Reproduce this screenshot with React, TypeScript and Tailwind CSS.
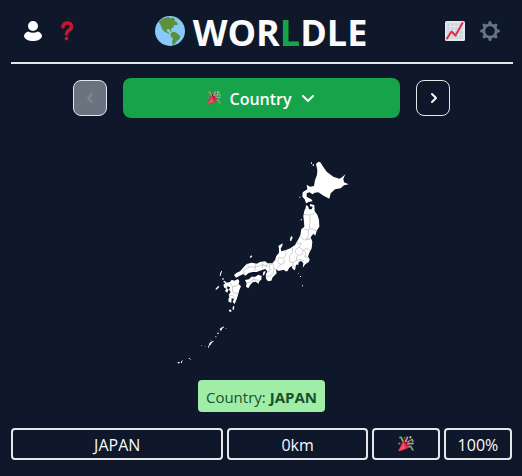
import React from "react";

function Globe() {
  return (
    <svg viewBox="0 0 90 90" className="size-[30px]" aria-hidden="true">
      <circle cx="45" cy="45" r="45" fill="#88c9f9" />
      <path
        fill="#5c913b"
        d="M11 18 L23 8 L40 3 L47 7 L55 5 L61 10 L58 15 L66 18 L69 26 L62 28 L58 26 L55 34 L49 38 L47 44 L42 39 L36 40 L35 45 L41 49 L43 54 L36 50 L28 47 L21 38 L17 27Z M49 50 L57 47 L64 50 L70 55 L76 60 L73 70 L65 76 L60 84 L53 88 L51 75 L54 68 L48 62 L46 55Z M44 43 l5 0 l1 4 l-5 -1Z"
      />
    </svg>
  );
}

function Party({ className }: { className: string }) {
  return (
    <svg viewBox="0 0 36 36" className={className} aria-hidden="true">
      <path fill="#dd2e44" d="M12 8 C10 13 1 33 1 34 C3 36 23 28 28 25 C26 18 20 10 12 8Z" />
      <path fill="#ea596e" d="M13 12 C12 20 5 29 1 34 L18 27 C14 24 12 19 13 12Z" />
      <path fill="#a0041e" d="M12 8 C18 8 28 18 28 24 C23 25 12 16 12 8Z" />
      <path d="M18 14 C15 8 23 9 21 1" fill="none" stroke="#aa8dd8" strokeWidth="4" />
      <path d="M21 19 C25 14 29 19 35 16" fill="none" stroke="#aa8dd8" strokeWidth="4" />
      <path d="M3 4 C11 0 6 9 12 12" fill="none" stroke="#77b255" strokeWidth="4" />
      <path d="M24 24 C32 20 29 31 35 32" fill="none" stroke="#77b255" strokeWidth="4" />
      <path d="M22 14 C24 9 29 10 33 7" fill="none" stroke="#ffcc4d" strokeWidth="3" strokeDasharray="3 2" />
      <circle cx="28" cy="3" r="2.500" fill="#ffcc4d" />
      <circle cx="3" cy="17" r="2.500" fill="#9266cc" />
      <circle cx="33" cy="11" r="2.500" fill="#77b255" />
      <circle cx="15" cy="4" r="2" fill="#5c913b" />
    </svg>
  );
}

function Person() {
  return (
    <svg viewBox="0 0 20 20" className="size-5" fill="#fff" aria-hidden="true">
      <circle cx="10" cy="5" r="5" />
      <path d="M5 10.500 Q10 13 15 10.500 C17 11 19 13 19 15.200 C18 18.500 14 20 10 20 S2 18.500 1 15.200 C1 13 3 11 5 10.500Z" />
    </svg>
  );
}

function Question() {
  return (
    <svg viewBox="0 0 20 20" className="size-5" aria-hidden="true">
      <path d="M6 6 C6 3 8 2 10.500 2 C13.500 2 14.500 4 14.500 6 C14.500 9.500 9.500 9 9.500 13" fill="none" stroke="#be1931" strokeWidth="3.600" strokeLinecap="round" />
      <circle cx="9.500" cy="17.500" r="1.900" fill="#be1931" />
    </svg>
  );
}

function ChartUp() {
  return (
    <svg viewBox="0 0 20 20" className="size-5" aria-hidden="true">
      <rect width="20" height="20" rx="1.500" fill="#e1e8ed" />
      <path fill="#ccd6dd" d="M2 2h3v3H2zM6 2h3v3H6zM10 2h3v3h-3zM14 2h4v3h-4zM2 6h3v3H2zM6 6h3v3H6zM10 6h3v3h-3zM14 6h4v3h-4zM2 10h3v3H2zM6 10h3v3H6zM10 10h3v3h-3zM14 10h4v3h-4zM2 14h3v4H2zM6 14h3v4H6zM10 14h3v4h-3zM14 14h4v4h-4z" />
      <path d="M2 17.500 L6.500 10.500 L10.500 14.500 L17.500 2" fill="none" stroke="#dd2e44" strokeWidth="2" strokeLinecap="round" strokeLinejoin="round" />
    </svg>
  );
}

function Gear() {
  const teeth = [0, 45, 90, 135, 180, 225, 270, 315];
  return (
    <svg viewBox="0 0 20 20" className="size-5" aria-hidden="true">
      <circle cx="10" cy="10" r="6.200" fill="none" stroke="#66757f" strokeWidth="2.800" />
      {teeth.map((angle) => (
        <path key={angle} d="M8 3.500 L8.700 0.600 Q10 -0.400 11.300 0.600 L12 3.500Z" fill="#66757f" transform={`rotate(${angle} 10 10)`} />
      ))}
    </svg>
  );
}

function Chevron({ points, className }: { points: string; className: string }) {
  return (
    <svg viewBox="0 0 16 16" className={className} fill="none" stroke="currentColor" strokeWidth="2" strokeLinecap="round" strokeLinejoin="round" aria-hidden="true">
      <polyline points={points} />
    </svg>
  );
}

function JapanMap() {
  return (
    <svg viewBox="0 0 552 660" className="h-[220px] w-[184px]" fill="#fff" role="img" aria-label="Country outline">
      {/* Hokkaido */}
      <g transform="translate(300 0)">
        <path d="M145 35 L151 37 L158 48 L170 65 L190 80 L208 86 L216 82 L226 73 L220 86 L222 97 L236 103 L222 106 L212 115 L195 118 L182 130 L178 146 L162 138 L145 127 L134 128 L128 133 L118 127 L110 130 L110 140 L124 148 L128 154 L118 155 L108 160 L104 148 L97 140 L98 127 L112 118 L110 104 L120 110 L132 108 L135 90 L141 75 L142 60 L138 42Z" />
        <path d="M123 37h3v4h-3zM128 43h4v4h-4zM88 140h3v3h-3z" />
      </g>
      {/* Honshu */}
      <g transform="translate(270 150)">
        <path d="M133 32 L137 24 L138 16 L144 18 L147 28 L155 28 L158 20 L150 19 L150 12 L163 15 L164 34 L172 44 L177 60 L178 80 L170 92 L166 107 L160 101 L152 112 L157 125 L155 145 L148 158 L144 170 L149 178 L147 185 L136 193 L128 203 L130 190 L124 183 L116 186 L115 194 L108 194 L105 211 L98 207 L95 198 L88 203 L82 214 L76 214 L72 209 L55 213 L48 207 L50 220 L38 232 L34 242 L24 244 L18 236 L17 225 L22 214 L16 207 L4 211 L-10 216 L-22 216 L-34 219 L-44 227 L-50 222 L-62 228 L-72 233 L-78 225 L-70 218 L-60 214 L-48 200 L-40 192 L-25 188 L-10 191 L0 186 L15 184 L23 190 L37 190 L45 181 L49 168 L57 158 L57 145 L55 138 L68 130 L67 137 L62 146 L64 154 L78 150 L91 145 L105 135 L115 118 L121 105 L124 88 L133 80 L132 66 L130 48Z" />
        <path d="M91 113 l3 -5 l4 4 l-4 10 l-4 1Z M122 58h4v3h-4zM114 219h2v2h-2zM120 228h3v3h-3zM126 256h3v3h-3z" />
        <g fill="none" stroke="#b8b8bc" strokeWidth="2">
          <path d="M131 43 L140 45 L150 44 L163 40 M149 45 L150 65 L148 86 M131 87 L142 90 L155 86 L172 94 M145 88 L145 107 L139 118 L151 115 M120 110 L132 120 L151 117 M111 130 L124 130 L118 142 L130 150 L140 145 L150 151 M118 142 L108 147 L106 158 L114 166 L126 163 L130 150 L138 160 L134 171 L146 172 M98 144 L97 158 L88 168 L89 185 L99 188 L109 181 L111 168 M77 151 L78 165 L70 175 L57 172 L52 183 L60 193 L71 191 L73 178 M99 188 L98 200 M109 181 L122 179 L132 182 M60 193 L52 206 M45 181 L38 190 L42 204 L49 210 M38 190 L27 196 L31 211 L22 216 M42 204 L40 220 L28 230 L18 226 M23 190 L17 202 M8 187 L8 204 M-12 191 L-16 213 M-40 193 L-31 201 L-48 210 L-48 224 M-31 201 L-14 201 L8 194 L25 200" />
        </g>
      </g>
      {/* Shikoku, Kyushu and the nearby islands */}
      <g transform="translate(120 270)">
        <path d="M105 120 L117 118 L124 110 L136 110 L145 104 L155 108 L154 119 L148 124 L146 131 L137 125 L128 127 L120 136 L115 145 L108 140 L110 130Z M160 95 l7 -2 l-3 10 l-6 5Z" />
        <path d="M50 128 L60 126 L65 119 L73 122 L84 117 L88 124 L86 132 L93 139 L88 150 L84 165 L80 178 L74 192 L68 186 L72 176 L65 175 L64 188 L56 185 L55 178 L58 172 L56 164 L62 156 L57 149 L60 142 L53 139 L50 145 L56 148 L52 158 L45 153 L49 146 L43 143 L40 135 L46 129 L39 125 L44 122Z" />
        <path d="M31 98 l3 -6 l2 1 l-4 14 l-3 2Z M37 115h4v4h-4z M119 51 l5 -5 l3 3 l-5 5Z M22 140 l6 -3 l-2 6 l-7 6 l-3 -1Z M68 201 l4 -4 l1 5 l-2 8 l-3 0Z M57 209h6v4h-6z" />
        <path d="M61 129 L68 140 L78 138 L87 132 M68 140 L67 155 L75 160 L85 160 M58 166 L67 166 L76 174 M108 130 L119 127 L130 119 L148 121 M131 111 L131 121" fill="none" stroke="#b8b8bc" strokeWidth="2" />
      </g>
      {/* Southern island chain */}
      <g transform="translate(0 480)">
        <path d="M178 0h6v5h-6zM149 57 l4 -4 l6 -2 l3 -2 l0 3 l-6 4 l-1 5 l-4 1Z M142 68h4v4h-4zM136 79h3v3h-3zM114 111 l3 -7 l2 -6 l5 -3 l5 -3 l2 2 l-6 5 l-3 5 l-4 3 l-2 6 l-2 0Z M94 106h2v2h-2zM56 145h4v2h-4zM60 148h2v2h-2zM23 156h6v4h-6zM33 154h3v5h-3zM37 150h2v2h-2z" />
        <path fill="#7e8592" d="M166 55h4v2h-4zM106 108h2v3h-2zM121 89h2v3h-2z" />
      </g>
    </svg>
  );
}

const cell = "flex h-8 items-center justify-center rounded border-2 border-[#e5e7eb]";

export default function App() {
  return (
    <div className="flex min-h-screen flex-col bg-[#0f172a] pr-[9px] pl-[11px] font-['Open_Sans','Noto_Sans',sans-serif] text-base text-slate-50">
      <header className="flex h-16 items-center justify-between border-b-2 border-[#e5e7eb] pr-[13px] pl-3">
        <div className="flex gap-3.5">
          <button aria-label="Profile"><Person /></button>
          <button aria-label="How to play"><Question /></button>
        </div>
        <h1 className="flex items-center gap-2 text-4xl font-bold">
          <Globe />
          <span className="pt-1">WOR<span className="text-[#16a34a]">L</span>DLE</span>
        </h1>
        <div className="flex gap-[15px]">
          <button aria-label="Statistics"><ChartUp /></button>
          <button aria-label="Settings"><Gear /></button>
        </div>
      </header>
      <main className="flex flex-col pr-px">
        <nav className="mt-3.5 flex items-center justify-center gap-4">
          <button disabled aria-label="Previous round" className="flex h-9 w-[34px] items-center justify-center rounded-lg border border-[#e5e7eb] bg-[#6b7280] text-[#84868b]">
            <Chevron points="10,4 6,8 10,12" className="size-4" />
          </button>
          <button className="flex h-10 w-[277px] items-center justify-center rounded-lg bg-[#16a34a] font-semibold text-white">
            <Party className="mr-2 size-3.5" />
            <span className="pt-0.5">Country</span>
            <Chevron points="3,6 8,11 13,6" className="ml-2 size-4" />
          </button>
          <button aria-label="Next round" className="flex h-9 w-[34px] items-center justify-center rounded-lg border border-[#e5e7eb]">
            <Chevron points="7,4 11,8 7,12" className="size-4" />
          </button>
        </nav>
        <div className="mt-8 flex justify-center">
          <JapanMap />
        </div>
        <p className="mt-2.5 flex h-8 items-center gap-1 self-center rounded bg-[#a0eda7] px-2 pt-0.5 text-[15px] text-[#14532d]">
          Country: <strong className="font-bold">JAPAN</strong>
        </p>
        <div className="mt-4 grid grid-cols-7 gap-1">
          <div className={`${cell} col-span-3 pt-0.5`}>JAPAN</div>
          <div className={`${cell} col-span-2 pt-0.5`}>0km</div>
          <div className={cell}><Party className="size-4" /></div>
          <div className={`${cell} pt-0.5`}>100%</div>
        </div>
      </main>
    </div>
  );
}
